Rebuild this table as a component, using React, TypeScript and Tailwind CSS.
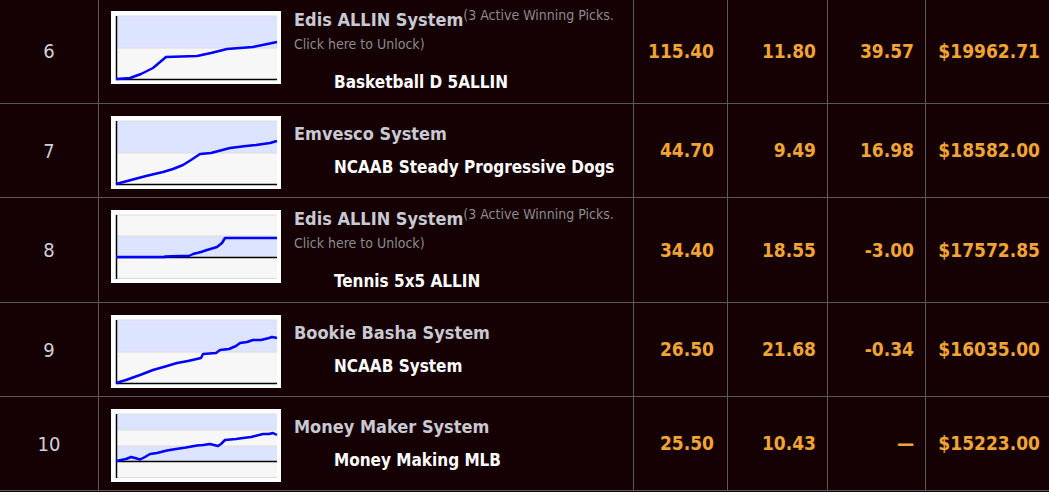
import React from 'react';

type Band = { y0: number; y1: number; blue: boolean };
type Chart = { bands: Band[]; axis: number; points: [number, number][] };
type Row = {
  rank: number;
  system: string;
  unlock?: boolean;
  name: string;
  roi: string;
  units: string;
  last: string;
  bank: string;
  height: string;
  chart: Chart;
};

const rows: Row[] = [
  {
    rank: 6,
    system: 'Edis ALLIN System',
    unlock: true,
    name: 'Basketball D 5ALLIN',
    roi: '115.40',
    units: '11.80',
    last: '39.57',
    bank: '$19962.71',
    height: 'h-[105px]',
    chart: {
      bands: [{ y0: 5, y1: 37, blue: true }, { y0: 37, y1: 68, blue: false }],
      axis: 68,
      points: [[5, 68], [19, 67], [30, 63], [42, 57], [55, 46], [86, 45], [100, 42], [116, 38], [142, 36], [166, 31]],
    },
  },
  {
    rank: 7,
    system: 'Emvesco System',
    name: 'NCAAB Steady Progressive Dogs',
    roi: '44.70',
    units: '9.49',
    last: '16.98',
    bank: '$18582.00',
    height: 'h-[94px]',
    chart: {
      bands: [{ y0: 5, y1: 37, blue: true }, { y0: 37, y1: 68, blue: false }],
      axis: 68,
      points: [[5, 68], [20, 64], [35, 60], [52, 56], [62, 53], [72, 49], [80, 44], [89, 38], [100, 37], [119, 32], [135, 30], [145, 29], [159, 27], [166, 25]],
    },
  },
  {
    rank: 8,
    system: 'Edis ALLIN System',
    unlock: true,
    name: 'Tennis 5x5 ALLIN',
    roi: '34.40',
    units: '18.55',
    last: '-3.00',
    bank: '$17572.85',
    height: 'h-[105px]',
    chart: {
      bands: [{ y0: 5, y1: 26, blue: false }, { y0: 26, y1: 47, blue: true }, { y0: 47, y1: 68, blue: false }],
      axis: 47,
      points: [[5, 47], [54, 47], [54, 46.5], [69, 46], [78, 46], [82, 44], [90, 42], [96, 40], [106, 37], [111, 33], [114, 28], [166, 28]],
    },
  },
  {
    rank: 9,
    system: 'Bookie Basha System',
    name: 'NCAAB System',
    roi: '26.50',
    units: '21.68',
    last: '-0.34',
    bank: '$16035.00',
    height: 'h-[94px]',
    chart: {
      bands: [{ y0: 5, y1: 37, blue: true }, { y0: 37, y1: 68, blue: false }],
      axis: 68,
      points: [[5, 68], [15, 65], [29, 60], [42, 55], [56, 51], [66, 48], [77, 46], [90, 43], [92, 39], [105, 38], [109, 35], [118, 34], [125, 31], [129, 28], [136, 27], [142, 25], [150, 25], [158, 23], [161, 22], [166, 23]],
    },
  },
  {
    rank: 10,
    system: 'Money Maker System',
    name: 'Money Making MLB',
    roi: '25.50',
    units: '10.43',
    last: '—',
    bank: '$15223.00',
    height: 'h-[94px]',
    chart: {
      bands: [{ y0: 5, y1: 21, blue: true }, { y0: 21, y1: 37, blue: false }, { y0: 37, y1: 52, blue: true }, { y0: 52, y1: 68, blue: false }],
      axis: 52,
      points: [[5, 52], [10, 51], [15, 50], [20, 48], [24, 49], [29, 50.5], [34, 48], [39, 45], [46, 44], [56, 41.5], [65, 40], [75, 38.5], [86, 36.5], [92, 36], [99, 35], [103, 36], [107, 37], [110, 35], [114, 31], [125, 30], [132, 29], [140, 28], [152, 25], [158, 25], [162, 24], [166, 26]],
    },
  },
];

function MiniChart({ chart }: { chart: Chart }) {
  const pts = chart.points.map(([x, y]) => `${x},${y}`).join(' ');
  return (
    <svg width="170" height="73" viewBox="0 0 170 73" className="block bg-white shrink-0">
      {chart.bands.map((b, i) => (
        <rect key={i} x="5" y={b.y0} width="161" height={b.y1 - b.y0} fill={b.blue ? '#dde4ff' : '#f7f7f7'} />
      ))}
      {chart.bands.map((b, i) => (
        <line key={'g' + i} x1="5" x2="166" y1={b.y0} y2={b.y0} stroke="#dcdcdc" strokeWidth="1" />
      ))}
      <line x1="5" x2="166" y1="68.5" y2="68.5" stroke="#dcdcdc" strokeWidth="1" />
      <line x1="5" x2="166" y1={chart.axis + 0.5} y2={chart.axis + 0.5} stroke="#000" strokeWidth="1.5" />
      <line x1="5.5" x2="5.5" y1="5" y2="69" stroke="#000" strokeWidth="1.5" />
      <polyline points={pts} fill="none" stroke="#0000ff" strokeWidth="2.5" strokeLinejoin="round" />
    </svg>
  );
}

export default function App() {
  return (
    <div className="w-[1049px] h-[492px] overflow-hidden bg-[#150003] font-['DejaVu_Sans_Condensed','DejaVu_Sans',sans-serif]">
      <div className="-mt-px">
        {rows.map((r) => (
          <div key={r.rank} className={`flex ${r.height} border-b border-[#5a5a5a]`}>
            <div className="w-[99px] shrink-0 border-r border-[#5a5a5a] flex items-center justify-center text-[20px] text-[#d0d0d8]">
              {r.rank}
            </div>
            <div className="w-[535px] shrink-0 border-r border-[#5a5a5a] flex items-center pl-[12px]">
              <div className={r.unlock ? 'mb-[8px]' : 'mt-[3px]'}>
                <MiniChart chart={r.chart} />
              </div>
              <div className="ml-[13px] flex flex-col">
                <div className="h-[24px] leading-[24px] whitespace-nowrap">
                  <span className="text-[18px] font-bold text-[#c9c9d2]">{r.system}</span>
                  {r.unlock && (
                    <span className="text-[14px] text-[#8c8c8c] relative -top-[6px]">(3 Active Winning Picks.</span>
                  )}
                </div>
                {r.unlock && (
                  <div className="h-[24px] leading-[24px] text-[14px] text-[#8c8c8c]">Click here to Unlock)</div>
                )}
                <div className={`${r.unlock ? 'mt-[14px]' : 'mt-[9px]'} h-[24px] leading-[24px] pl-[40px] text-[17px] font-bold text-white whitespace-nowrap`}>
                  {r.name}
                </div>
              </div>
            </div>
            <div className="w-[94px] shrink-0 border-r border-[#5a5a5a] flex items-center justify-end pr-[13px] text-[19px] font-bold text-[#f0a435]">
              {r.roi}
            </div>
            <div className="w-[100px] shrink-0 border-r border-[#5a5a5a] flex items-center justify-end pr-[11px] text-[19px] font-bold text-[#f0a435]">
              {r.units}
            </div>
            <div className="w-[98px] shrink-0 border-r border-[#5a5a5a] flex items-center justify-end pr-[11px] text-[19px] font-bold text-[#f0a435]">
              {r.last}
            </div>
            <div className="flex-1 flex items-center justify-end pr-[9px] text-[19px] font-bold text-[#f0a435]">
              {r.bank}
            </div>
          </div>
        ))}
      </div>
    </div>
  );
}
